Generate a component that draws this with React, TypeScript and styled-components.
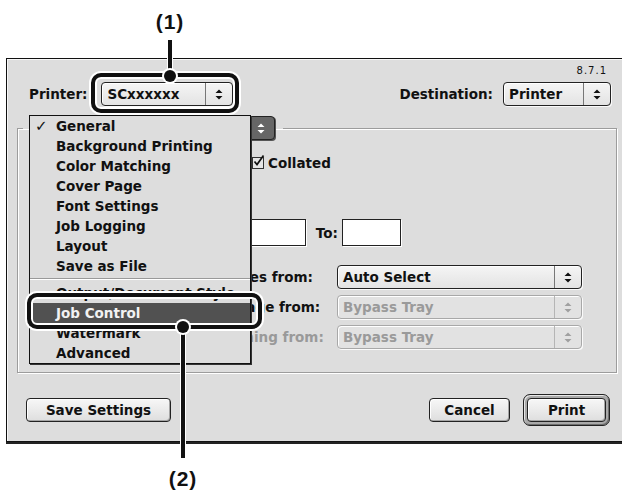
import styled, { createGlobalStyle } from "styled-components"

const GlobalStyle = createGlobalStyle`
  html, body {
    margin: 0;
    padding: 0;
    background: #fff;
  }
`

const ui = `"DejaVu Sans", "Noto Sans", sans-serif`

const menuItems = [
  "General",
  "Background Printing",
  "Color Matching",
  "Cover Page",
  "Font Settings",
  "Job Logging",
  "Layout",
  "Save as File",
  "-",
  "Output/Document Style",
  "Job Control",
  "Watermark",
  "Advanced",
]

const Arrows = ({ color }: { color: string }) => (
  <svg width="8" height="11" viewBox="0 0 8 11">
    <path d="M4 0.5 L7.5 4 H0.5Z M0.5 7 H7.5 L4 10.5Z" fill={color} />
  </svg>
)

type PopupProps = { label: string; width: number; disabled?: boolean; pressed?: boolean }

const Popup = ({ label, width, disabled, pressed }: PopupProps) => (
  <PopupBox $width={width} $disabled={disabled} $pressed={pressed}>
    <PopupText>{label}</PopupText>
    <PopupArrows $disabled={disabled} $pressed={pressed}>
      <Arrows color={pressed ? "#fff" : disabled ? "#a0a0a0" : "#111"} />
    </PopupArrows>
  </PopupBox>
)

export default function App() {
  return (
    <Page>
      <GlobalStyle />
      <Dialog>
        <Version>8.7.1</Version>
        <Header>
          <HeaderField $gap={14}>
            <span>Printer:</span>
            <Popup label="SCxxxxxx" width={132} />
          </HeaderField>
          <HeaderField $gap={10}>
            <span>Destination:</span>
            <Popup label="Printer" width={108} />
          </HeaderField>
        </Header>

        <GroupBox>
          <Legend>
            <Popup label="General" width={245} pressed />
          </Legend>

          <FormRow $top={0} $h={24}>
            <SectionLabel>Copies:</SectionLabel>
            <Controls>
              <TextBox $w={44} $h={24}>1</TextBox>
              <CheckWrap>
                <CheckBox>
                  <svg width="14" height="14" viewBox="0 0 14 14">
                    <path d="M2.5 6.5 L5 9.5 L11.5 0.5" fill="none" stroke="#111" strokeWidth="1.7" />
                  </svg>
                </CheckBox>
                <span>Collated</span>
              </CheckWrap>
            </Controls>
          </FormRow>

          <FormRow $top={8} $h={24}>
            <SectionLabel>Pages:</SectionLabel>
            <Controls>
              <Radio $on />
              <span>All</span>
            </Controls>
          </FormRow>

          <FormRow $top={12} $h={27}>
            <span />
            <Controls>
              <Radio />
              <span>From:</span>
              <TextBox $w={59} $h={27} $left={6} />
              <ToLabel>To:</ToLabel>
              <TextBox $w={59} $h={27} $left={4} />
            </Controls>
          </FormRow>

          <FormRow $top={19} $h={24}>
            <SectionLabel>Paper Source:</SectionLabel>
            <Controls>
              <Radio $on />
              <SourceLabel>All pages from:</SourceLabel>
              <Popup label="Auto Select" width={245} />
            </Controls>
          </FormRow>

          <FormRow $top={6} $h={24}>
            <span />
            <Controls>
              <Radio />
              <SourceLabel>First page from:</SourceLabel>
              <Popup label="Bypass Tray" width={245} disabled />
            </Controls>
          </FormRow>

          <FormRow $top={6} $h={24}>
            <span />
            <Controls>
              <RadioSpacer />
              <SourceLabel $disabled>Remaining from:</SourceLabel>
              <Popup label="Bypass Tray" width={245} disabled />
            </Controls>
          </FormRow>
        </GroupBox>

        <Footer>
          <PushButton $w={145}>Save Settings</PushButton>
          <Spacer />
          <PushButton $w={81}>Cancel</PushButton>
          <DefaultRing>
            <PushButton $w={79}>Print</PushButton>
          </DefaultRing>
        </Footer>
      </Dialog>

      <Menu>
        {menuItems.map((item) =>
          item === "-" ? (
            <MenuSep key="sep" />
          ) : (
            <MenuItem key={item} $active={item === "Job Control"}>
              <MenuMark>{item === "General" ? "✓" : ""}</MenuMark>
              {item}
            </MenuItem>
          )
        )}
      </Menu>

      <CalloutLabel $x={170} $y={10}>(1)</CalloutLabel>
      <CalloutLine $x={168} $y={40} $h={36} />
      <CalloutBox $x={91} $y={73} $w={148} $h={40} />
      <CalloutDot $x={170} $y={76} />

      <CalloutBox $x={27} $y={293} $w={235} $h={36} />
      <CalloutLine $x={181} $y={327} $h={131} />
      <CalloutDot $x={183} $y={327} />
      <CalloutLabel $x={183} $y={467}>(2)</CalloutLabel>
    </Page>
  )
}

const Page = styled.div`
  position: relative;
  width: 622px;
  height: 499px;
  overflow: hidden;
  background: #fff;
`
const Dialog = styled.div`
  margin: 58px 0 0 6px;
  width: 626px;
  box-sizing: border-box;
  display: flex;
  flex-direction: column;
  padding: 0 14px 15px 10px;
  background: #dddddd;
  border: 1px solid #111;
  box-shadow: inset 1px 1px 0 #f7f7f7, 0 2px 0 #222;
  font-family: ${ui};
  font-weight: bold;
  font-size: 13.5px;
  color: #111;
`
const Version = styled.div`
  align-self: flex-end;
  margin: 6px 10px 0 0;
  font-weight: normal;
  font-size: 10px;
  line-height: 12px;
  letter-spacing: 1px;
`
const Header = styled.div`
  display: flex;
  align-items: center;
  justify-content: space-between;
  margin-top: 5px;
  padding: 0 6px 0 12px;
  height: 24px;
`
const HeaderField = styled.div<{ $gap: number }>`
  display: flex;
  align-items: center;
  gap: ${(p) => p.$gap}px;
`
const PopupBox = styled.div<{ $width: number; $disabled?: boolean; $pressed?: boolean }>`
  display: flex;
  width: ${(p) => p.$width}px;
  height: 24px;
  box-sizing: border-box;
  border: 1px solid ${(p) => (p.$disabled ? "#a8a8a8" : "#222")};
  border-radius: 4px;
  background: ${(p) =>
    p.$pressed ? "#666" : p.$disabled ? "#e2e2e2" : "linear-gradient(#f5f5f5, #e3e3e3)"};
  box-shadow: ${(p) => (p.$pressed ? "1px 1px 0 #555" : "inset 1px 1px 0 #fff, 1px 1px 0 #fafafa")};
  color: ${(p) => (p.$pressed ? "#fff" : p.$disabled ? "#9a9a9a" : "#111")};
`
const PopupText = styled.div`
  flex: 1;
  padding-left: 5px;
  line-height: 22px;
  white-space: nowrap;
  overflow: hidden;
`
const PopupArrows = styled.div<{ $disabled?: boolean; $pressed?: boolean }>`
  width: 26px;
  display: flex;
  align-items: center;
  justify-content: center;
  border-left: 1px solid ${(p) => (p.$pressed ? "#444" : p.$disabled ? "#b5b5b5" : "#777")};
`
const GroupBox = styled.fieldset`
  margin: 10px 0 0;
  padding: 11px 0 23px;
  min-width: 0;
  border: 1px solid #9c9c9c;
  box-shadow: inset 1px 1px 0 #fff, 1px 1px 0 #fff;
`
const Legend = styled.legend`
  margin-left: 5px;
  padding: 0 8px 0 7px;
`
const FormRow = styled.div<{ $top: number; $h: number }>`
  display: grid;
  grid-template-columns: 150px 1fr;
  column-gap: 8px;
  align-items: center;
  margin-top: ${(p) => p.$top}px;
  height: ${(p) => p.$h}px;
  padding-left: 2px;
`
const SectionLabel = styled.span`
  text-align: right;
`
const Controls = styled.div`
  display: flex;
  align-items: center;
`
const Radio = styled.span<{ $on?: boolean }>`
  width: 12px;
  height: 12px;
  margin-right: 7px;
  box-sizing: border-box;
  border: 1px solid #222;
  border-radius: 50%;
  background: ${(p) => (p.$on ? "radial-gradient(circle, #111 0 2.5px, #eee 3px)" : "#eee")};
`
const RadioSpacer = styled.span`
  width: 19px;
`
const TextBox = styled.div<{ $w: number; $h: number; $left?: number }>`
  width: ${(p) => p.$w}px;
  height: ${(p) => p.$h}px;
  margin-left: ${(p) => p.$left ?? 0}px;
  box-sizing: border-box;
  padding: 3px 5px;
  background: #fff;
  border: 1px solid #222;
  box-shadow: 1px 1px 0 #fff;
  font-weight: normal;
`
const ToLabel = styled.span`
  margin-left: 10px;
`
const CheckWrap = styled.div`
  display: flex;
  align-items: center;
  gap: 4px;
  margin-left: 30px;
`
const CheckBox = styled.span`
  display: flex;
  align-items: flex-end;
  width: 12px;
  height: 12px;
  box-sizing: border-box;
  border: 1px solid #333;
  background: #e6e6e6;
  overflow: visible;

  svg {
    flex: none;
    margin: 0 -3px -1px -1px;
  }
`
const SourceLabel = styled.span<{ $disabled?: boolean }>`
  width: 140px;
  color: ${(p) => (p.$disabled ? "#999" : "#111")};
`
const Footer = styled.div`
  display: flex;
  align-items: center;
  gap: 13px;
  margin-top: 21px;
  padding: 0 7px 0 9px;
`
const Spacer = styled.div`
  flex: 1;
`
const PushButton = styled.button<{ $w: number }>`
  width: ${(p) => p.$w}px;
  height: 24px;
  padding: 0;
  border: 1px solid #222;
  border-radius: 4px;
  background: linear-gradient(#f7f7f7, #dedede);
  box-shadow: inset 1px 1px 0 #fff, inset -1px -1px 0 #a5a5a5;
  font-family: ${ui};
  font-weight: bold;
  font-size: 13.5px;
  color: #111;
`
const DefaultRing = styled.div`
  display: flex;
  padding: 3px;
  border: 1px solid #222;
  border-radius: 7px;
  background: #a9a9a9;
  box-shadow: inset 1px 1px 0 #e6e6e6, inset -1px -1px 0 #6e6e6e;
`
const Menu = styled.div`
  position: absolute;
  left: 29px;
  top: 115px;
  width: 222px;
  box-sizing: border-box;
  background: #dddddd;
  border: 1px solid #111;
  box-shadow: 1px 1px 0 #333;
  font-family: ${ui};
  font-weight: bold;
  font-size: 13.5px;
  color: #111;
`
const MenuItem = styled.div<{ $active?: boolean }>`
  display: flex;
  height: 20px;
  line-height: 20px;
  white-space: nowrap;
  background: ${(p) => (p.$active ? "#515151" : "transparent")};
  color: ${(p) => (p.$active ? "#f2f2f2" : "#111")};
`
const MenuMark = styled.span`
  width: 21px;
  padding-left: 5px;
  font-size: 15px;
`
const MenuSep = styled.div`
  height: 1px;
  margin: 2px 0 3px;
  background: #999;
  border-bottom: 1px solid #fff;
`
const CalloutBox = styled.div<{ $x: number; $y: number; $w: number; $h: number }>`
  position: absolute;
  left: ${(p) => p.$x}px;
  top: ${(p) => p.$y}px;
  width: ${(p) => p.$w}px;
  height: ${(p) => p.$h}px;
  box-sizing: border-box;
  border: 4px solid #111;
  border-radius: 10px;
  box-shadow: 0 0 0 2px #fff, inset 0 0 0 2px #fff;
`
const CalloutLine = styled.div<{ $x: number; $y: number; $h: number }>`
  position: absolute;
  left: ${(p) => p.$x}px;
  top: ${(p) => p.$y}px;
  width: 4px;
  height: ${(p) => p.$h}px;
  background: #111;
  box-shadow: 0 0 0 1px #fff;
`
const CalloutDot = styled.div<{ $x: number; $y: number }>`
  position: absolute;
  left: ${(p) => p.$x - 6}px;
  top: ${(p) => p.$y - 6}px;
  width: 12px;
  height: 12px;
  border-radius: 50%;
  background: #111;
  box-shadow: 0 0 0 2px #fff;
`
const CalloutLabel = styled.div<{ $x: number; $y: number }>`
  position: absolute;
  left: ${(p) => p.$x - 30}px;
  top: ${(p) => p.$y}px;
  width: 60px;
  text-align: center;
  font-family: "Liberation Sans", Arial, sans-serif;
  font-weight: bold;
  font-size: 21px;
  letter-spacing: 1px;
  color: #111;
`
